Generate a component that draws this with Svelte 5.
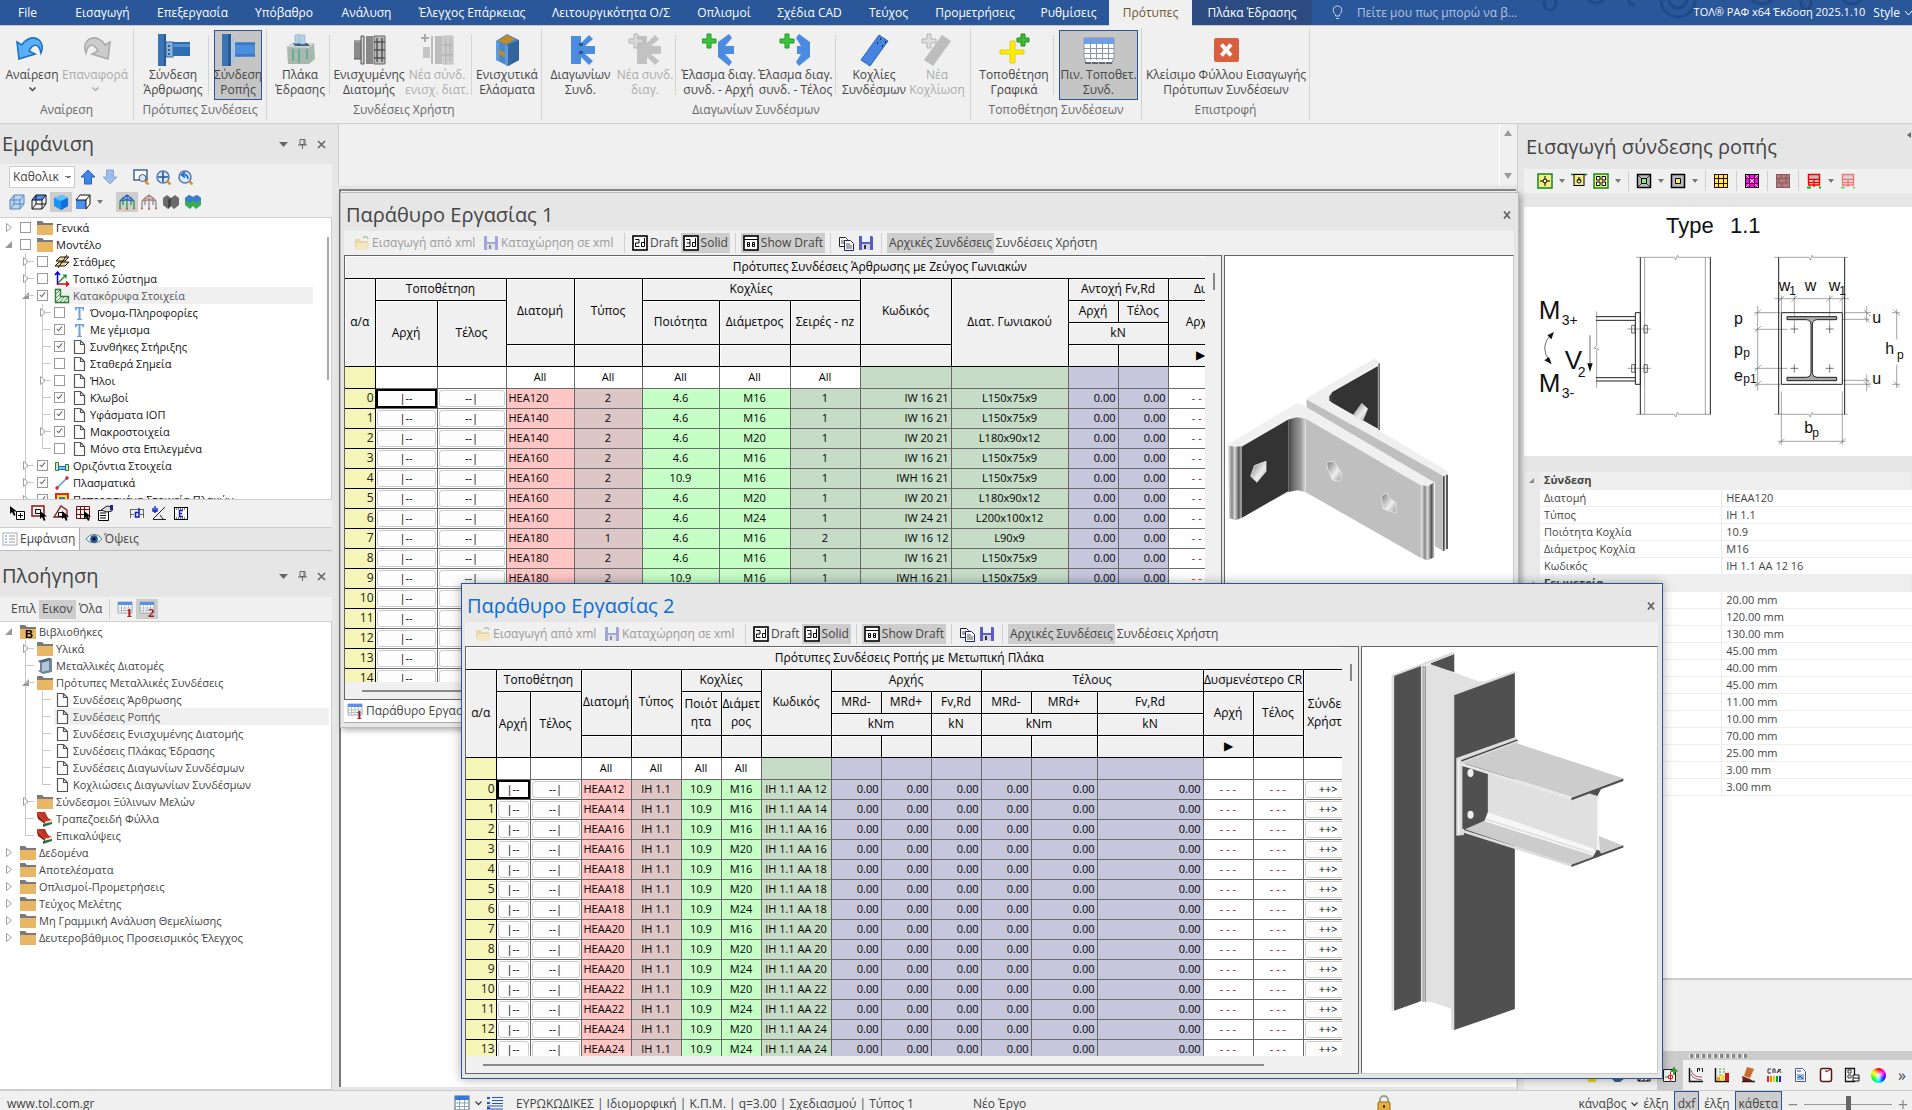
<script>
  const tabs = [
    ['File', 61], ['Εισαγωγή', 83], ['Επεξεργασία', 97], ['Υπόβαθρο', 86], ['Ανάλυση', 79],
    ['Έλεγχος Επάρκειας', 132], ['Λειτουργικότητα Ο/Σ', 146], ['Οπλισμοί', 80], ['Σχέδια CAD', 91],
    ['Τεύχος', 67], ['Προμετρήσεις', 106], ['Ρυθμίσεις', 81], ['Πρότυπες', 83], ['Πλάκα Έδρασης', 120]
  ];

  const groups = [
    { title: 'Αναίρεση', w: 134, start: true, items: [
      { t: ['Αναίρεση'], i: 'undo', w: 64, arrow: true },
      { t: ['Επαναφορά'], i: 'redo', w: 62, arrow: true, off: true }] },
    { title: 'Πρότυπες Συνδέσεις', w: 133, items: [
      { t: ['Σύνδεση', 'Άρθρωσης'], i: 'pinned', w: 70 }, null,
      { t: ['Σύνδεση', 'Ροπής'], i: 'moment', w: 48, on: true }] },
    { title: 'Συνδέσεις Χρήστη', w: 275, items: [
      { t: ['Πλάκα', 'Έδρασης'], i: 'base', w: 58 }, null,
      { t: ['Ενισχυμένης', 'Διατομής'], i: 'stiff', w: 68 },
      { t: ['Νέα σύνδ.', 'ενισχ. διατ.'], i: 'stiffNew', w: 68, off: true }, null,
      { t: ['Ενισχυτικά', 'Ελάσματα'], i: 'plates', w: 60 }] },
    { title: 'Διαγωνίων Συνδέσμων', w: 429, items: [
      { t: ['Διαγωνίων', 'Συνδ.'], i: 'diag', w: 69 },
      { t: ['Νέα συνδ.', 'διαγ.'], i: 'diagNew', w: 60, off: true }, null,
      { t: ['Έλασμα διαγ.', 'συνδ. - Αρχή'], i: 'diagStart', w: 75 },
      { t: ['Έλασμα διαγ.', 'συνδ. - Τέλος'], i: 'diagEnd', w: 79 }, null,
      { t: ['Κοχλίες', 'Συνδέσμων'], i: 'bolts', w: 66 },
      { t: ['Νέα', 'Κοχλίωση'], i: 'boltsNew', w: 60, off: true }] },
    { title: 'Τοποθέτηση Συνδέσεων', w: 171, items: [
      { t: ['Τοποθέτηση', 'Γραφικά'], i: 'place', w: 78 }, null,
      { t: ['Πιν. Τοποθετ.', 'Συνδ.'], i: 'table', w: 79, on: true }] },
    { title: 'Επιστροφή', w: 168, items: [
      { t: ['Κλείσιμο Φύλλου Εισαγωγής', 'Πρότυπων Συνδέσεων'], i: 'close', w: 160 }] }
  ];

  const knee = '<path d="M4 3h10v7l8-8 4 4-8 7h10v8H18l8 7-4 4-8-8v7H4z"/>';
  const plus = '<path d="M5 0h4v5h5v4H9v5H5V9H0V5h5z"/>';
  const strip = '<path d="M22 2l9 6-18 25-9-6z"/>';
  const big = {
    undo: '<path d="M2 13 4 30 20 25 14 22C18 14 24 14 26 24 31 12 20 4 9 13L7 16z" transform="translate(0 -4)" fill="#5ab0f5" stroke="#1c6fc4" stroke-width="1.6"/>',
    redo: '<path d="M32 13 30 30 14 25 20 22C16 14 10 14 8 24 3 12 14 4 25 13L27 16z" transform="translate(0 -4)" fill="#ccc" stroke="#aaa" stroke-width="1.6"/>',
    pinned: '<rect x="2" y="1" width="8" height="32" fill="#3a74b4"/><rect x="8" y="1" width="2" height="32" fill="#28598f"/><rect x="16" y="9" width="18" height="14" fill="#2f6db3"/><path d="M16 11h18v3H16z" fill="#558fd0"/><rect x="10" y="9" width="7" height="15" fill="#86b5e8" stroke="#34689f"/><path d="M13 12v2m0 2v2m0 2v2" stroke="#234" stroke-width="1.4"/>',
    moment: '<rect x="1" y="1" width="8" height="32" fill="#3a74b4"/><rect x="7" y="1" width="3" height="32" fill="#28598f"/><path d="M11 5h2v25h-2z" fill="#9fc5f0"/><rect x="14" y="9" width="20" height="15" fill="#4b8fdc"/><path d="M14 10h20v2H14zm0 11h20v2H14z" fill="#3a79c4"/>',
    base: '<path d="M4 14 9 10h22l1 16-6 5H5z" fill="#a9b8ae"/><path d="M4 14 9 10h22l-5 5z" fill="#cfd8d0"/><path d="M10 10h14l3 3H12z" fill="#3d5f83"/><path d="M12 2 16 1v9l-4 1zm5 0h5v9h-5z" fill="#b3d3ea" stroke="#87a9c4" stroke-width=".6"/><path d="M10 16v12m6-12v14m8-14v10" stroke="#4faa92" stroke-width="1.5"/>',
    stiff: '<path d="M2 9h7v17H2z" fill="#8b8b8b"/><path d="M9 3h3v28H9zM2 8h7M2 26h7" fill="#ccc" stroke="#555"/><path d="M14 3h7v28h-7z" fill="#888"/><path d="M22 3h11v28H22z" fill="#bbb" stroke="#666"/><path d="M25 5v24m5-24v24M22 9h11m-11 8h11m-11 8h11" stroke="#555" stroke-width="1.5" fill="none"/>',
    stiffNew: '<path d="M3 14h7v11H3z" fill="#c4c4c4"/><path d="M5 1v8M1 5h8" stroke="#aaa" stroke-width="2"/><path d="M11 3h2v28h-2z" fill="#bbb"/><path d="M15 3h7v28h-7z" fill="#bdbdbd"/><path d="M23 3h10v28H23z" fill="#d0d0d0" stroke="#bbb"/><path d="M26 5v24m4-24v24M22 12h11m-11 10h11" stroke="#b5b5b5" stroke-width="1.5"/>',
    plates: '<path d="M6 8 17 1l12 6v20L18 33 6 27z" fill="#4e87c8"/><path d="M17 12 29 7v20l-11 6z" fill="#33649c"/><path d="M8 8 17 2l8 4-9 5z" fill="#c88a1c"/><path d="M8 16l7 4v4l-7-3z" fill="#c88a1c"/><path d="M6 8v19l3 1V10zm9 4v20l3 1V13z" fill="#5e9ae0"/>',
    diag: `<g fill="#4b8be0"><g transform="translate(3)">${knee}</g></g><path d="M17 10v11" stroke="#29588f" stroke-width="4" stroke-dasharray="3 5"/>`,
    diagNew: `<g fill="#c2c2c2"><g transform="translate(5)">${knee}</g></g><g fill="#d8d8d8" stroke="#b4b4b4" transform="translate(1 1)">${plus}</g>`,
    diagStart: `<g fill="#4b8be0"><path d="M16 9l11-8 3 4-7 8h9v8h-9l7 8-3 4-11-9z"/></g><g fill="#3cc43a" stroke="#25962a" transform="translate(0 1)">${plus}</g>`,
    diagEnd: `<g fill="#4b8be0"><path d="M31 9 20 1l-3 4 5 8h-4v8h4l-5 8 3 4 11-9z"/></g><g fill="#3cc43a" stroke="#25962a" transform="translate(1 1)">${plus}</g>`,
    bolts: `<g fill="#4585e0" stroke="#2e68b8">${strip}</g><path d="M23 6h1m4 3h1m-9 1h1m4 3h1" stroke="#123" stroke-width="2"/>`,
    boltsNew: `<g fill="#bdbdbd">${strip}</g><g fill="#ddd" stroke="#b4b4b4" transform="translate(2 1)">${plus}</g>`,
    place: '<path d="M13 8h5v9h9v4h-9v9h-5v-9H3v-4h10z" fill="#ffee00" stroke="#d8c400" stroke-width=".8"/><path d="M24 1h4v4h4v4h-4v4h-4V9h-4V5h4z" fill="#42b830" stroke="#2a8a22"/>',
    table: '<path d="M2 5h30v19l-2 6H4l-2-6z" fill="#fff" stroke="#8a93a5"/><path d="M2 5h30v6H2z" fill="#6aa0f0"/><path d="M2 15.500h30M2 20.500h30M2 25.500h30M8.500 5v22m6-22v22m6-22v22m6-22v22" stroke="#8b95ab" fill="none"/><path d="M3 30h28" stroke="#475060" stroke-width="1.500" stroke-dasharray="6 1"/>',
    close: '<rect x="5" y="5" width="25" height="24" rx="2" fill="#d9603f"/><path d="M12.500 11.500l9.500 11m0-11-9.500 11" stroke="#fff" stroke-width="4"/>'
  };

  const cubeWire = '<path d="M1 6h10v9H1zM5 1h10v9H5zM1 6l4-5m6 5 4-5M1 15l4-5m6 5 4-5" fill="none" stroke="#111"/>';
  const frame = (c, top) => `<path d="M1 14V7M4 11V4M8 15V6M12 11V4M15 14V7" fill="none" stroke="${c}" stroke-width="1.300"/><path d="M1 7l7-1 7 1M4 4l4-3 4 3M1 7l3-3 4 2 4-2 3 3M8 1v5" fill="none" stroke="${top}" stroke-width="1.200"/><path d="M0 14.500h2m5 .5h2m5-.5h2" stroke="#d06030" stroke-width="1.500"/>`;
  const doc = '<path d="M3.500 1.500h6l4 4v9h-10zM9.500 1.500v4h4" fill="#fff" stroke="#555" stroke-width="1.200"/>';
  const floppy = '<path d="M1 1h13l1 1v13H1z" fill="#5a5cc4"/><path d="M4 1h8v6H4z" fill="#e9f2fb"/><path d="M4 9h8v6H4z" fill="#cfd6e4"/><path d="M6 10h2v4H6z" fill="#333"/>';
  const grid = (n) => `<path d="M1 1h14v11H1z" fill="#fff" stroke="#9aa"/><path d="M1 1h14v3H1z" fill="#5b8fe8"/><path d="M1 7h14M1 9.500h14M4.500 4v8m3.500-8v8m3.500-8v8" stroke="#b9c0cc"/><text x="9" y="16" font-size="13" font-weight="bold" font-family="Liberation Serif" fill="#a81418">${n}</text>`;
  const cursor = '<path d="M1 1v8l2-2 2 4 1.500-1L5 6.500h3z" fill="#000"/>';
  const folder = '<path d="M0 1h5l2 2h9v2H0z" fill="#7a7a7a"/><path d="M0 5h16v10H0z" fill="#e9b666"/>';
  const mag = '<circle cx="8" cy="8" r="6" fill="#dcebfb" stroke="#4d79b5" stroke-width="1.500"/><path d="M12 12l3.500 3.500" stroke="#d9912b" stroke-width="2.500"/>';
  const boxed = (t) => `<rect x="1" y="1" width="14" height="14" fill="#fff" stroke="#000" stroke-width="1.600"/>${t}`;
  const digit2 = '<path d="M3.500 5v-.5h3.500v3.500H3.500v3.500H7.500" fill="none" stroke="#000"/>';
  const digit3 = '<path d="M3 4.500h4v7H3m1-3.500h3" fill="none" stroke="#000"/>';
  const dd = '<path d="M12.500 3v8.500h-3v-4h3" fill="none" stroke="#000"/>';
  const book = '<path d="M0 1h8l3 6 4 2-7 2L0 5z" fill="#d03a28"/><path d="M0 4l8 7v2L1 8z" fill="#8a2015"/><path d="M3 1l6 8M6 1l5 7" stroke="#a02818"/><path d="M8 11l7-2v2l-7 2z" fill="#f0e0c0"/><path d="M6 13l9-2v2l-9 3z" fill="#2a6d46"/>';
  const ic = {
    folder, doc, book, floppy,
    folderB: folder + '<text x="5" y="14" font-size="11" font-weight="bold" font-family="Liberation Sans">B</text>',
    beam: '<path d="M1 3 12 0l3 1v13l-9 2-5-3 2-1V5z" fill="#6f8598"/><path d="M1 3 12 0l3 1-9 3z" fill="#4f6475"/><path d="M5 5l7-2v9l-7 2z" fill="#b4c6d6"/>',
    levels: '<path d="M1 12 5 8h10l-4 4zM2 7l4-4h9l-4 4z" fill="#f6dc86" stroke="#111"/><path d="M4 14 13 1" stroke="#111"/>',
    axes: '<path d="M3.500 14V2M1 4l2.500-3L6 4" fill="none" stroke="#0000e8" stroke-width="1.500"/><path d="M3 13h11M12 10.500l2.500 2.500-2.500 2.500" fill="none" stroke="#e00000" stroke-width="1.500"/><path d="M4 12l8-8M8.500 4H12v3.500" fill="none" stroke="#108030" stroke-width="1.200"/>',
    wall: '<path d="M1.500 1.500h5v7h8v6h-13z" fill="#e3f4e3" stroke="#22862c" stroke-width="1.300"/><path d="M2 6l4-4M2 10l4-4M2 14l5-5M6 14l4-5m0 5 4-5" stroke="#555" stroke-width=".8"/>',
    T: '<path d="M4 2h9v3.500h-1L11 3.500H9.500v10l1.500.5v1H6v-1l1.500-.5v-10H6l-1 2H4z" fill="#6ea2dd"/>',
    horiz: '<path d="M1.500 4.500h3v8h-3zM11.500 6.500h3v6h-3z" fill="#cfe8c8" stroke="#2f7a33"/><path d="M4.500 8.500h7v3h-7z" fill="#7ec8f0" stroke="#1570a8"/>',
    line: '<path d="M3 13 13 3" stroke="#4a9bd8" stroke-width="1.500"/><path d="M1 13h4M3 11v4M11 3h4M13 1v4" stroke="#d00" stroke-width="1.200"/>',
    fem: '<rect x="1" y="1" width="14" height="14" fill="#e8281a"/><rect x="3" y="3" width="10" height="10" fill="#ffe12b"/><rect x="5" y="5" width="6" height="6" fill="#1f7be0"/>',
    up: '<path d="M8 1l7 7h-3.500v7h-7V8H1z" fill="#3f86e6" stroke="#2a62b8"/>',
    down: '<path d="M8 15 1 8h3.500V1h7v7H15z" fill="#9dbdec" stroke="#86a6d8"/>',
    zRect: '<rect x="1" y="1" width="13" height="10" fill="#fff" stroke="#355b8c" stroke-width="1.400"/><circle cx="9.500" cy="9" r="3.500" fill="#d5e6fa" stroke="#557"/><path d="M12 12l3.500 3.500" stroke="#d9912b" stroke-width="2.500"/>',
    zAll: mag + '<path d="M8 3v10M3 8h10" stroke="#23508f" stroke-width="1.600"/>',
    zPrev: mag + '<path d="M11 10c0-4-3-5-5-4M8 3 4.500 6 8 8.500" fill="none" stroke="#2a6fd0" stroke-width="1.800"/>',
    c1: '<path d="M1 6l4-5h10v9l-4 5H1z" fill="#b9d6f5"/><path d="M1 6h10v9H1zM5 1h10v9H5zM1 6l4-5m6 5 4-5M1 15l4-5m6 5 4-5" fill="none" stroke="#5b86b8"/>',
    c2: '<path d="M1 6l4-5h10l-4 5z" fill="#4a90f0"/>' + cubeWire,
    c3: '<path d="M1 4 9 1l6 3v8l-7 4-7-4z" fill="#1993f5"/><path d="M1 4 9 1l6 3-7 3z" fill="#5cc2ff"/><path d="M8 7l7-3v8l-7 4z" fill="#0f6fe0"/>',
    c4: '<path d="M5 1h10v9l-4 5V6H1z" fill="#fff"/><path d="M1 6h10v9H1z" fill="#4a90f0"/><path d="M5 1h10v9M1 6l4-5m6 5 4-5m-4 14 4-5M1 6h10v9" fill="none" stroke="#111"/>',
    f1: frame('#2e9a46', '#2a62c8'),
    f2: frame('#8a8a8a', '#a8807a'),
    f3: '<path d="M0 4 4 1l4 3 4-3 4 3v7l-5 4-3-3-3 3-5-4z" fill="#6a6a6a"/><path d="M8 4v8l-3 3V6z" fill="#444"/>',
    f4: '<path d="M0 4 4 1l4 2 4-2 4 3v7l-5 4-3-3-3 3-5-4z" fill="#34b050"/><path d="M0 4 4 1l4 2 4-2 4 3v2l-5 3-3-3-3 3-5-3z" fill="#3f78dc"/>',
    s1: cursor + '<path d="M7.500 6.500h8v8h-8zM11.500 8v5M9 10.500h5" fill="#fff" stroke="#000"/>',
    s2: '<path d="M1 1h12v10H1z" fill="none" stroke="#8a1420" stroke-width="1.500"/><path d="M4.500 4.500h5v4h-5z" fill="none" stroke="#000"/><g transform="translate(8 5)">' + cursor + '</g>',
    s3: '<path d="M1 12 8 1l6 4v7z" fill="none" stroke="#8a1420" stroke-width="1.300"/><path d="M5.500 7.500h5v4h-5z" fill="none" stroke="#000"/><g transform="translate(8 5)">' + cursor + '</g>',
    s4: '<path d="M1.500 1.500h13v12h-13zM1.500 4.500h13M5.500 1.500v12m4-12v12M2 9.500h8" fill="none" stroke="#611"/><g transform="translate(8 5)">' + cursor + '</g>',
    s5: '<path d="M1.500 5.500h10v10h-10zM3 8h6M3 10.500h6M3 13h6" fill="#fff" stroke="#000"/><path d="M4 5l6-4 5 1v4l-5 1z" fill="#ddd" stroke="#222"/><path d="M13 0h3v5h-3z" fill="#1a2a8a"/>',
    s6: '<path d="M1.500 4v9m13-9v9M1 4.500h14M2 9.500h3m6 0h3" fill="none" stroke="#666"/><path d="M10 3v9H6.500V7.500H10" fill="none" stroke="#1020c0" stroke-width="1.500"/>',
    s7: '<path d="M2 14 14 2M2 14.500h13M9 10l3 4" fill="none" stroke="#222"/><path d="M2 3v3h4V3M4 1v7" fill="none" stroke="#1020c0" stroke-width="1.400"/>',
    s8: '<rect x="1.500" y="2.500" width="13" height="12" fill="#fff" stroke="#000"/><path d="M3 4h10M3 13h10" stroke="#000" stroke-dasharray="1 1"/><path d="M10 5.500H6.500v6H10M6 8.500h3" fill="none" stroke="#1020c0" stroke-width="1.500"/>',
    list: '<rect x="1" y="2" width="14" height="12" fill="#fff" stroke="#aab"/><path d="M3 5h2m-2 3h2m-2 3h2" stroke="#48c"/><path d="M7 5h6M7 8h6m-6 3h6" stroke="#999"/>',
    eye: '<path d="M0 8c4-6 12-6 16 0-4 5-12 5-16 0z" fill="#e8f1fa" stroke="#678"/><circle cx="8" cy="8" r="3.800" fill="#215a9a"/><circle cx="8" cy="8" r="1.600" fill="#001"/>',
    sh1: grid(1), sh2: grid(2),
    open: '<path d="M1 4h5l1 2h7v9H1z" fill="#e8c264"/><path d="M3 8h13l-2 7H1z" fill="#f7df98"/><path d="M9 3c2-2 4-2 5 1" fill="none" stroke="#48b048" stroke-width="1.500"/>',
    d2: boxed(digit2 + dd), d3: boxed(digit3 + dd),
    draft: boxed('<path d="M1 4.500h14M4.500 7.500h2v4h-2zm5 0h2v4h-2zM4.500 9.500h2m3 0h2" fill="none" stroke="#000"/>'),
    copy: '<path d="M1.500 2.500h6l2 2v7h-8z" fill="#fff" stroke="#223"/><path d="M3 6h4M3 8h4" stroke="#555"/><path d="M6.500 5.500h6l3 3v7h-9z" fill="#fff" stroke="#1a2470"/><path d="M8 9h4m-4 2h6m-6 2h6" stroke="#555"/>',
    r1: '<rect x="1" y="1" width="14" height="14" fill="#f4f07a" stroke="#118822" stroke-width="1.500"/><path d="M8 3v10M3 8h10" stroke="#000"/><circle cx="8" cy="8" r="2" fill="#fff" stroke="#000"/>',
    r2: '<path d="M0 1.500h16" stroke="#117722" stroke-width="1.500"/><rect x="3" y="1.500" width="10" height="11" fill="#f4f07a" stroke="#000"/><circle cx="8" cy="8" r="2" fill="#fff" stroke="#000"/><path d="M8 4v4" stroke="#000"/>',
    r3: '<rect x="1" y="1" width="14" height="14" fill="#f4f07a" stroke="#118822" stroke-width="1.500"/><path d="M3.500 3.500h3.500v3.500H3.500zM9 3.500h3.500v3.500H9zM3.500 9h3.500v3.500H3.500zM9 9h3.500v3.500H9z" fill="#fff" stroke="#000"/>',
    r4: '<rect x="1.500" y="1.500" width="13" height="13" fill="#bbb" stroke="#000" stroke-width="1.500"/><path d="M2 2l12 12M14 2 2 14" stroke="#000" stroke-width=".7"/><path d="M5.500 5.500h5v5h-5z" fill="#7df07d" stroke="#000"/>',
    r5: '<rect x="1.500" y="1.500" width="13" height="13" fill="#bbb" stroke="#000" stroke-width="1.500"/><path d="M5.500 5.500h5v5h-5z" fill="#ffee44" stroke="#000"/>',
    r6: '<rect x="1.500" y="1.500" width="13" height="13" fill="#ffee44" stroke="#300"/><path d="M2 5.500h12M2 10.500h12M5.500 2v12M10.500 2v12" stroke="#300"/>',
    r7: '<rect x="1.500" y="1.500" width="13" height="13" fill="#f0f" stroke="#000"/><path d="M2 2l12 12M14 2 2 14" stroke="#ff4"/><path d="M5.500 2v12m5-12v12M2 5.500h12M2 10.500h12" stroke="#000" stroke-width=".6" fill="none"/>',
    r8: '<rect x="1.500" y="1.500" width="13" height="13" fill="#c07878" stroke="#7a6060"/><path d="M2 5.500h12M2 10h12M6 2v3.500m5-3.500v3.500M4 6v4m7-4v4M7 10v4" stroke="#7a6060" stroke-width="1.200"/>',
    r9: '<path d="M2.500 1.500h11v5h-11z" fill="#bbb" stroke="#e00" stroke-width="1.500"/><path d="M2.500 6v6M13.500 6v6M2 9.500h12M8 7v7M2 12h12" stroke="#e00" stroke-width="1.300"/><path d="M1 14.500h4m8 0h2" stroke="#0b0" stroke-width="2"/>',
    b1: '<path d="M4 12h8v3H4z" fill="#e8d800"/>',
    b2: '<path d="M1 11c4-3 10-3 14 0l-5 4H5z" fill="#3d5f83"/>',
    b3: '<path d="M2 2h12v12H2zM2 11h12" fill="#fff" stroke="#000"/><path d="M3 14l2-3m2 3 2-3m2 3 2-3" stroke="#000"/>',
    b4: '<path d="M1.500 2.500h12v12h-12z" fill="#fff" stroke="#222"/><path d="M6.500 8.500h4v3h-4zM8.500 5v10M3 10h4" fill="none" stroke="#d22"/><path d="M12 0v8M8.500 4h7" stroke="#3aa63a" stroke-width="2"/>',
    b5: '<path d="M1.500 1v13.500H15" fill="none" stroke="#111" stroke-width="1.500"/><path d="M3 3c2 6 6 7 11 7M3 7c2 5 6 5 11 6" fill="none" stroke="#a05070"/><path d="M9.500 5V1.500h2v2.500m3 1V1.500h-1" fill="none" stroke="#111"/>',
    b6: '<path d="M1.500 1v13.500H15" fill="none" stroke="#111" stroke-width="1.500"/><path d="M3 10h3v4H3z" fill="#f90"/><path d="M7 8h3v6H7z" fill="#fd0"/><path d="M11 6h4v8h-4z" fill="#d11"/><path d="M6 1v8m4-8v5" stroke="#2a2" stroke-dasharray="2 1"/>',
    b7: '<path d="M7 0l7 2-4 9-6-2z" fill="#c86a2a"/><path d="M2 9l8 3 4 3H3z" fill="#7a1a10"/><path d="M2 14.500h13" stroke="#222" stroke-width="1.500"/>',
    b8: '<path d="M5 2H2v4h3M7 2v4m0-4h2v4M11 6l2-4 2 4m-4 0 4-4" fill="none" stroke="#334"/><path d="M2 9v6" stroke="#e22" stroke-width="2"/><path d="M5 9v6" stroke="#f80" stroke-width="2"/><path d="M8 9v6" stroke="#dd0" stroke-width="2"/><path d="M11 9v6" stroke="#0a0" stroke-width="2"/><path d="M14 9v6" stroke="#22d" stroke-width="2"/>',
    b9: '<path d="M3.500 1.500h7l3 3v10h-10z" fill="#fff" stroke="#557"/><path d="M5 7h7v6H5z" fill="#8ab4ea"/><path d="M5 4h4M6 11l2-2 3 3" stroke="#347" fill="none"/>',
    b10: '<rect x="2.500" y="1.500" width="11" height="13" rx="2" fill="#fff" stroke="#611" stroke-width="1.500"/><path d="M8 5l5-3M8 5V3" stroke="#611"/>',
    b11: '<path d="M1.500 1.500h9v13h-9z" fill="#fff" stroke="#111" stroke-width="1.300"/><path d="M4 3v3h3V3zm0 5v3h3V8z" fill="none" stroke="#333"/><path d="M9 8h6v6H9zM9 11h6" fill="#fff" stroke="#111"/>',
    calc: '<rect x="1" y="1" width="14" height="14" fill="#fff" stroke="#567"/><path d="M1 1h14v4H1z" fill="#3a78d8"/><path d="M1 8h14M1 11.500h14M5.500 5v10m5-10v10" stroke="#8aa"/>',
    lines: '<path d="M0 3h3m-3 5h3m-3 5h3" stroke="#25c" stroke-width="2"/><path d="M5 2.500h11M5 5.500h11M5 8.500h11M0 11h16M0 14h16" stroke="#25c"/>',
    lock: '<path d="M4 8V5a4 4 0 0 1 8 0v3" fill="none" stroke="#999" stroke-width="1.800"/><rect x="2" y="7" width="12" height="9" rx="1" fill="#e8b23a" stroke="#9a6d10"/><path d="M8 10v3" stroke="#532" stroke-width="2"/>'
  };

  // [depth, expander, checked, icon, label, flag]
  const view = [
    [0, 'c', 0, 'folder', 'Γενικά'], [0, 'o', 0, 'folder', 'Μοντέλο'],
    [1, 'c', 0, 'levels', 'Στάθμες'], [1, 'c', 0, 'axes', 'Τοπικό Σύστημα'],
    [1, 'o', 1, 'wall', 'Κατακόρυφα Στοιχεία', 'sel'],
    [2, 'c', 0, 'T', 'Όνομα-Πληροφορίες'], [2, '', 1, 'T', 'Με γέμισμα'],
    [2, '', 1, 'doc', 'Συνθήκες Στήριξης'], [2, '', 0, 'doc', 'Σταθερά Σημεία'],
    [2, 'c', 0, 'doc', 'Ήλοι'], [2, '', 1, 'doc', 'Κλωβοί'], [2, '', 1, 'doc', 'Υφάσματα ΙΟΠ'],
    [2, 'c', 1, 'doc', 'Μακροστοιχεία'], [2, '', 0, 'doc', 'Μόνο στα Επιλεγμένα', 'last'],
    [1, 'c', 1, 'horiz', 'Οριζόντια Στοιχεία'], [1, 'c', 1, 'line', 'Πλασματικά'],
    [1, 'c', 1, 'fem', 'Πεπερασμένα Στοιχεία Πλακών']
  ];
  const library = [
    [0, 'o', null, 'folderB', 'Βιβλιοθήκες'], [1, 'c', null, 'folder', 'Υλικά'],
    [1, '', null, 'beam', 'Μεταλλικές Διατομές'], [1, 'o', null, 'folder', 'Πρότυπες Μεταλλικές Συνδέσεις'],
    [2, '', null, 'doc', 'Συνδέσεις Άρθρωσης'], [2, '', null, 'doc', 'Συνδέσεις Ροπής', 'sel'],
    [2, '', null, 'doc', 'Συνδέσεις Ενισχυμένης Διατομής'], [2, '', null, 'doc', 'Συνδέσεις Πλάκας Έδρασης'],
    [2, '', null, 'doc', 'Συνδέσεις Διαγωνίων Συνδέσμων'], [2, '', null, 'doc', 'Κοχλιώσεις Διαγωνίων Συνδέσμων', 'last'],
    [1, 'c', null, 'folder', 'Σύνδεσμοι Ξύλινων Μελών'], [1, '', null, 'book', 'Τραπεζοειδή Φύλλα'],
    [1, '', null, 'book', 'Επικαλύψεις', 'last'], [0, 'c', null, 'folder', 'Δεδομένα'],
    [0, 'c', null, 'folder', 'Αποτελέσματα'], [0, 'c', null, 'folder', 'Οπλισμοί-Προμετρήσεις'],
    [0, 'c', null, 'folder', 'Τεύχος Μελέτης'], [0, 'c', null, 'folder', 'Μη Γραμμική Ανάλυση Θεμελίωσης'],
    [0, 'c', null, 'folder', 'Δευτεροβάθμιος Προσεισμικός Έλεγχος']
  ];

  // header cells: [text, colspan, rowspan]
  const hinge = {
    title: 'Πρότυπες Συνδέσεις Άρθρωσης με Ζεύγος Γωνιακών',
    cols: [30, 62, 69, 68, 68, 77, 71, 70, 91, 117, 50, 50, 64, 86, 97],
    head: [
      [['α/α', 1, 4], ['Τοποθέτηση', 2, 1], ['Διατομή', 1, 3], ['Τύπος', 1, 3], ['Κοχλίες', 3, 1], ['Κωδικός', 1, 3], ['Διατ. Γωνιακού', 1, 4], ['Αντοχή Fv,Rd', 2, 1], ['Δυσμενέστερο CR', 2, 1], ['Σύνδεση\nΧρήστη', 1, 4]],
      [['Αρχή', 1, 3], ['Τέλος', 1, 3], ['Ποιότητα', 1, 2], ['Διάμετρος', 1, 2], ['Σειρές - nz', 1, 2], ['Αρχή', 1, 1], ['Τέλος', 1, 1], ['Αρχή', 1, 2], ['Τέλος', 1, 2]],
      [['kN', 2, 1]],
      [...Array(8).fill(['', 1, 1]), ['▶', 1, 1], ['', 1, 1]]
    ],
    kinds: ['pink', 'rose', 'green', 'green', 'sage', 'sage end', 'sage', 'lav', 'lav', 'dash', 'dash'],
    filters: ['All', 'All', 'All', 'All', 'All', '', '', '', '', '', ''],
    rows: [
      ['HEA120', 2, '4.6', 'M16', 1, 'IW 16 21', 'L150x75x9'], ['HEA140', 2, '4.6', 'M16', 1, 'IW 16 21', 'L150x75x9'],
      ['HEA140', 2, '4.6', 'M20', 1, 'IW 20 21', 'L180x90x12'], ['HEA160', 2, '4.6', 'M16', 1, 'IW 16 21', 'L150x75x9'],
      ['HEA160', 2, '10.9', 'M16', 1, 'IWH 16 21', 'L150x75x9'], ['HEA160', 2, '4.6', 'M20', 1, 'IW 20 21', 'L180x90x12'],
      ['HEA160', 2, '4.6', 'M24', 1, 'IW 24 21', 'L200x100x12'], ['HEA180', 1, '4.6', 'M16', 2, 'IW 16 12', 'L90x9'],
      ['HEA180', 2, '4.6', 'M16', 1, 'IW 16 21', 'L150x75x9'], ['HEA180', 2, '10.9', 'M16', 1, 'IWH 16 21', 'L150x75x9'],
      ...Array(5).fill(['', '', '', '', '', '', ''])
    ].map((r) => (r[0] ? [...r, '0.00', '0.00', '- - -', '- - -'] : [...r, '', '', '', '']))
  };
  const moment = {
    title: 'Πρότυπες Συνδέσεις Ροπής με Μετωπική Πλάκα',
    cols: [30, 34, 51, 50, 50, 40, 40, 70, 50, 50, 50, 50, 66, 106, 50, 50, 50],
    head: [
      [['α/α', 1, 4], ['Τοποθέτηση', 2, 1], ['Διατομή', 1, 3], ['Τύπος', 1, 3], ['Κοχλίες', 2, 1], ['Κωδικός', 1, 3], ['Αρχής', 3, 1], ['Τέλους', 3, 1], ['Δυσμενέστερο CR', 2, 1], ['Σύνδεσ\nΧρήστη', 1, 4]],
      [['Αρχή', 1, 3], ['Τέλος', 1, 3], ['Ποιότ\nητα', 1, 2], ['Διάμετ\nρος', 1, 2], ['MRd-', 1, 1], ['MRd+', 1, 1], ['Fv,Rd', 1, 1], ['MRd-', 1, 1], ['MRd+', 1, 1], ['Fv,Rd', 1, 1], ['Αρχή', 1, 2], ['Τέλος', 1, 2]],
      [['kNm', 2, 1], ['kN', 1, 1], ['kNm', 2, 1], ['kN', 1, 1]],
      [...Array(11).fill(['', 1, 1]), ['▶', 1, 1], ['', 1, 1]]
    ],
    kinds: ['pink', 'rose', 'green', 'green', 'sage', 'lav', 'lav', 'lav', 'lav', 'lav', 'lav', 'dash', 'dash'],
    filters: ['All', 'All', 'All', 'All', '', '', '', '', '', '', '', '', ''],
    rows: ['12 16', '14 16', '16 16', '16 20', '18 16', '18 20', '18 24', '20 16', '20 20', '20 24', '22 20', '22 24', '24 20', '24 24'].map((s) => {
      const [h, m] = s.split(' ');
      return ['HEAA' + h, 'IH 1.1', '10.9', 'M' + m, 'IH 1.1 AA ' + h, ...Array(6).fill('0.00'), '- - -', '- - -'];
    })
  };

  const section = [['Διατομή', 'HEAA120'], ['Τύπος', 'IH 1.1'], ['Ποιότητα Κοχλία', '10.9'], ['Διάμετρος Κοχλία', 'M16'], ['Κωδικός', 'IH 1.1 AA 12 16']];
  const geometry = ['20.00', '120.00', '130.00', '45.00', '40.00', '45.00', '11.00', '10.00', '70.00', '25.00', '3.00', '3.00'];
  const rightTools = ['r1', '>', 'r2', 'r3', '>', '|', 'r4', '>', 'r5', '>', '|', 'r6', '|', 'r7', '|', 'r8', '|', 'r9', '>', 'r9 dim'];
  const bottomTools = ['b1', 'b2', 'b3', 'b4 on', 'b5', 'b6', 'b7', 'b8', 'b9', 'b10', 'b11'];
  const sum = (a) => a.reduce((x, y) => x + y, 0);
</script>

{#snippet icon(name)}
  <svg class="ic" viewBox="0 0 16 16" aria-hidden="true">{@html ic[name]}</svg>
{/snippet}

{#snippet tool(spec)}
  {#if spec === '|'}<i class="sep"></i>
  {:else if spec === '>'}<i class="caret"></i>
  {:else}<button class="tool {spec.split(' ')[1] ?? ''}" aria-label={spec}>{@render icon(spec.split(' ')[0])}</button>{/if}
{/snippet}

{#snippet tree(rows)}
  <ul class="tree">
    {#each rows as [depth, exp, checked, name, label, flag]}
      <li class:child={depth > 0} class:last={flag === 'last'}>
        {#each Array(depth) as _, i}<i class="guide" class:rule={i > 0}></i>{/each}
        <i class="exp">
          {#if exp}
            <svg width="8" height="9" viewBox="0 0 8 9"><path d={exp === 'c' ? 'M1.5.5v8l5-4z' : 'M7 1v7H0z'} fill={exp === 'c' ? '#fff' : '#999'} stroke={exp === 'c' ? '#a0a0a0' : 'none'} /></svg>
          {/if}
        </i>
        <label class:sel={flag === 'sel'}>
          {#if checked !== null}<input type="checkbox" checked={checked === 1} />{/if}
          <span class="node">{@render icon(name)}<span>{label}</span></span>
        </label>
      </li>
    {/each}
  </ul>
{/snippet}

{#snippet panelHead(title)}
  <header class="panel-head">
    <h2>{title}</h2>
    <button aria-label="Μενού"><svg width="9" height="9" viewBox="0 0 9 9"><path d="M0 2h9L4.500 7z" fill="#666" /></svg></button>
    <button aria-label="Καρφίτσωμα"><svg width="9" height="10" viewBox="0 0 9 10"><path d="M2 .5h5v5H2zM6 1v4M0 6h9M4.500 6v4" fill="none" stroke="#666" /></svg></button>
    <button aria-label="Κλείσιμο"><svg width="9" height="9" viewBox="0 0 9 9"><path d="M1 1l7 7M8 1 1 8" stroke="#666" stroke-width="1.600" /></svg></button>
  </header>
{/snippet}

{#snippet sheet(d)}
  <div class="pane">
    <div class="clip">
      <table class="sheet" style:width="{sum(d.cols)}px">
        <colgroup>{#each d.cols as w}<col style:width="{w}px" />{/each}</colgroup>
        <thead>
          <tr><th colspan={d.cols.length}>{d.title}</th></tr>
          {#each d.head as row}
            <tr>{#each row as [text, c, r]}<th colspan={c} rowspan={r}>{text}</th>{/each}</tr>
          {/each}
        </thead>
        <tbody>
          <tr class="filter">
            <td class="num"></td><td></td><td></td>
            {#each d.filters as f, i}<td class={f ? '' : d.kinds[i]}>{f}</td>{/each}<td></td>
          </tr>
          {#each d.rows as row, n}
            <tr>
              <td class="num">{n}</td>
              <td class="act" class:focus={n === 0}><button>|--</button></td>
              <td class="act"><button>--|</button></td>
              {#each row as v, i}<td class={d.kinds[i]}>{v}</td>{/each}
              <td class="act"><button>++&gt;</button></td>
            </tr>
          {/each}
        </tbody>
      </table>
    </div>
    <div class="vbar"><i></i></div>
    <div class="hbar"><i></i></div>
  </div>
{/snippet}

{#snippet winTools()}
  <div class="win-tools">
    <button class="dim wide">{@render icon('open')}Εισαγωγή από xml</button>
    <button class="dim wide2">{@render icon('floppy')}Καταχώρηση σε xml</button>
    <i class="sep"></i>
    <button>{@render icon('d2')}Draft</button>
    <button class="on">{@render icon('d3')}Solid</button>
    <i class="sep"></i>
    <button class="on">{@render icon('draft')}Show Draft</button>
    <i class="sep"></i>
    <button aria-label="Αντιγραφή">{@render icon('copy')}</button>
    <button aria-label="Αποθήκευση">{@render icon('floppy')}</button>
    <i class="sep"></i>
    <button class="on">Αρχικές Συνδέσεις</button>
    <button>Συνδέσεις Χρήστη</button>
  </div>
{/snippet}

{#snippet winHead(title)}
  <header class="win-head">
    <h2>{title}</h2>
    <button aria-label="Κλείσιμο"><svg width="8" height="8" viewBox="0 0 8 8"><path d="M1 .5l6 7M7 .5l-6 7" stroke="#666" stroke-width="1.800" /></svg></button>
  </header>
{/snippet}

<div class="app">
  <nav class="tabs">
    <svg class="deco" width="372" height="25" viewBox="0 0 372 25" aria-hidden="true">
      <g fill="none" stroke="#1f4a87" stroke-width="3">
        <ellipse cx="10" cy="3" rx="6" ry="7" /><circle cx="56" cy="-9" r="12" /><path d="M90-2c-3 4 0 8 5 6" />
        <circle cx="138" cy="0" r="17" /><circle cx="138" cy="-1" r="9" /><circle cx="222" cy="-9" r="13" />
        <ellipse cx="266" cy="2" rx="5" ry="8" /><circle cx="312" cy="-8" r="12" />
      </g>
    </svg>
    {#each tabs as [t, w], i}
      <button style:width="{w}px" class:active={i === 12} class:context={i === 13}>{t}</button>
    {/each}
    <label class="search">
      <svg width="11" height="15" viewBox="0 0 11 15"><path d="M3.500 11V9.500C0 7 .5 1 5.500 1s5.500 6 2 8.500V11zM4 13.500h3" fill="none" stroke="#c9d6ea" /></svg>
      <input placeholder="Πείτε μου πως μπορώ να β..." aria-label="Αναζήτηση" />
    </label>
    <span class="product">ΤΟΛ® ΡΑΦ x64 Έκδοση 2025.1.10</span>
    <button class="style">Style</button>
    <svg width="7" height="6" viewBox="0 0 7 6"><path d="M0 1l3.500 4L7 1" fill="none" stroke="#fff" /></svg>
  </nav>

  <div class="ribbon">
    {#each groups as g}
      <section style:width="{g.w}px">
        <div class="btns" class:start={g.start}>
          {#each g.items as b}
            {#if b}
              <button style:width="{b.w}px" class:on={b.on} class:off={b.off}>
                <svg width="34" height="34" viewBox="0 0 34 34" aria-hidden="true">{@html big[b.i]}</svg>
                {#each b.t as line}<span>{line}</span>{/each}
                {#if b.arrow}<svg class="chev" width="7" height="5" viewBox="0 0 7 5"><path d="M.5.5l3 3 3-3" fill="none" stroke="currentColor" stroke-width="1.500" /></svg>{/if}
              </button>
            {:else}<i></i>{/if}
          {/each}
        </div>
        <h3>{g.title}</h3>
      </section>
    {/each}
  </div>

  <main>
    <aside class="left">
      <section class="panel view">
        {@render panelHead('Εμφάνιση')}
        <div class="tools two">
          <div>
            <select aria-label="Σύστημα"><option>Καθολικ</option></select>
            {#each ['up', 'down'] as s}{@render tool(s)}{/each}
            <i class="space"></i>
            {#each ['zRect', 'zAll', 'zPrev'] as s}{@render tool(s)}{/each}
          </div>
          <div>
            {#each ['c1', 'c2', 'c3 on', 'c4', '>'] as s}{@render tool(s)}{/each}
            <i class="space small"></i>
            {#each ['f1 on', 'f2', 'f3', 'f4'] as s}{@render tool(s)}{/each}
          </div>
        </div>
        <div class="tree-box">{@render tree(view)}<i class="thumb"></i></div>
        <div class="tools foot">
          {#each ['s1', 's2', 's3', 's4', 's5'] as s}{@render tool(s)}{/each}
          <i class="space small"></i>
          {#each ['s6', 's7', 's8'] as s}{@render tool(s)}{/each}
        </div>
        <div class="pane-tabs">
          <button class="current">{@render icon('list')}Εμφάνιση</button>
          <button>{@render icon('eye')}Όψεις</button>
        </div>
      </section>
      <section class="panel library">
        {@render panelHead('Πλοήγηση')}
        <div class="tools text">
          <button>Επιλ</button><button class="on">Εικον</button><button>Όλα</button>
          {#each ['|', 'sh1', 'sh2 on'] as s}{@render tool(s)}{/each}
        </div>
        <div class="tree-box">{@render tree(library)}</div>
      </section>
    </aside>

    <div class="center">
      <div class="mdi-top">
        <div class="scroll"><i class="a-up"></i><i class="a-down"></i></div>
      </div>
      <div class="canvas"></div>
    </div>

    <aside class="right">
      <header><h2>Εισαγωγή σύνδεσης ροπής</h2><i></i></header>
      <div class="tools">{#each rightTools as s}{@render tool(s)}{/each}</div>
      <figure>
        <svg width="388" height="249" viewBox="42 111 1164 747" font-family="Liberation Sans, sans-serif" fill="#111" aria-label="Type 1.1">
          <g font-size="66"><text x="468" y="188">Type</text><text x="660" y="188">1.1</text></g>
          <g font-size="78"><text x="86" y="448">M</text><text x="164" y="597">V</text><text x="86" y="666">M</text></g>
          <g font-size="42"><text x="155" y="466">3+</text><text x="203" y="620">2</text><text x="155" y="683">3-</text></g>
          <g font-size="48"><text x="806" y="363">w</text><text x="884" y="363">w</text><text x="956" y="363">w</text><text x="672" y="462">p</text><text x="672" y="554">p</text><text x="672" y="632">e</text><text x="1087" y="458">u</text><text x="1087" y="642">u</text><text x="1126" y="552">h</text><text x="883" y="790">b</text></g>
          <g font-size="36"><text x="838" y="374">1</text><text x="988" y="374">1</text><text x="700" y="560">p</text><text x="700" y="640">p1</text><text x="1161" y="568">p</text><text x="907" y="800">p</text></g>
          <g fill="none" stroke="#777" stroke-width="2">
            <path d="M379 262h114l4 8 5-14 3 6h98M379 733h114l4 8 5-14 3 6h98M404 262v471M586 262v471" />
            <path d="M793 262h104l4 8 5-14 3 6h104M793 733h104l4 8 5-14 3 6h104" />
            <path d="M260 424v104l-8 6 14 4-6 4v112M352 477h70M352 595h70" />
            <path d="M793 386h224M814 376v50M853 376v88M959 376v88M997 376v50M733 428h78M733 478h100M733 595h100M733 643h78M743 408v254M1003 428h80M998 448h80M998 631h80M1003 643h80M1070 408v50M1070 614v50M1146 428h24M1160 418v90M1160 584v70M1146 643h24M814 664v160M997 664v160M803 814h204" />
            <path d="M735 436l18-18M735 486l18-18M735 603l18-18M735 651l18-18M1062 420l18 18M1062 440l18 18M1062 623l18 18M1062 635l18 18M1151 419l18 18M1151 634l18 18M805 395l18-18M844 395l18-18M950 395l18-18M988 395l18-18M805 823l18-18M988 823l18-18" />
            <path d="M853 465v25M841 477h24M959 465v25M947 477h24M853 583v25M841 595h24M959 583v25M947 595h24" stroke="#333" />
          </g>
          <g fill="none" stroke="#222" stroke-width="3">
            <path d="M391 262v471M601 262v471M806 262v471M1004 262v471M258 440h118M258 451h118M258 623h118M258 633h118" />
            <path d="M376 428h15v215h-15zM814 428h183v215H814z" />
            <path d="M365 466h10v23h-10zM402 466h10v23h-10zM365 584h10v23h-10zM402 584h10v23h-10z" stroke-width="2" />
            <path d="M831 440h149v9h-60q-13 2-13 16v145q2 12 14 12h59v10H831v-10h59q12 0 13-12V465q0-14-13-16h-59z" fill="#aaa" />
            <path d="M240 496v90M124 492q-38 38-4 84" stroke-width="2" />
          </g>
          <path d="M240 606l-8-26h16zM132 486l-20 10 12 12zM125 583l-22-12 14-10z" />
        </svg>
      </figure>
      <table class="props">
        <tbody>
          <tr class="cat"><th colspan="2">Σύνδεση</th></tr>
          {#each section as [k, v]}<tr><th>{k}</th><td>{v}</td></tr>{/each}
          <tr class="cat"><th colspan="2">Γεωμετρία</th></tr>
          {#each geometry as v}<tr><th></th><td>{v} mm</td></tr>{/each}
        </tbody>
      </table>
      <div class="help"></div>
      <div class="grip"><i></i></div>
      <div class="tools dock">
        {#each bottomTools as s}{@render tool(s)}{/each}
        <button class="tool" aria-label="Χρώμα"><i class="wheel"></i></button>
        <span class="more">»</span>
      </div>
    </aside>
  </main>

  <footer>
    <a href="#tol">www.tol.com.gr</a>
    <span class="codes">{@render icon('calc')}<svg width="7" height="5" viewBox="0 0 7 5"><path d="M.5.5l3 3 3-3" fill="none" stroke="#444" stroke-width="1.300" /></svg>{@render icon('lines')}</span>
    <span class="mode">ΕΥΡΩΚΩΔΙΚΕΣ | Ιδιομορφική | Κ.Π.Μ. | q=3.00 | Σχεδιασμού | Τύπος 1</span>
    <span class="project">Νέο Έργο</span>
    <span class="lock">{@render icon('lock')}</span>
    <div class="snap">
      <button>κάναβος</button>
      <svg width="7" height="5" viewBox="0 0 7 5"><path d="M.5.5l3 3 3-3" fill="none" stroke="#444" stroke-width="1.300" /></svg>
      <button>έλξη</button><button class="on">dxf</button><button>έλξη</button><button class="on">κάθετα</button>
      <span>−</span><input type="range" aria-label="Μεγέθυνση" /><span>+</span>
    </div>
  </footer>

  <section class="win one">
    {@render winHead('Παράθυρο Εργασίας 1')}
    {@render winTools()}
    <div class="win-body">
      {@render sheet(hinge)}
      <div class="preview">
        <svg width="290" height="327" viewBox="855 200 700 980" preserveAspectRatio="none" aria-label="Σύνδεση άρθρωσης">
          <defs>
            <linearGradient id="edge"><stop offset="0" stop-color="#eee" /><stop offset=".3" stop-color="#888" /><stop offset=".5" stop-color="#ddd" /><stop offset=".8" stop-color="#555" /><stop offset="1" stop-color="#ccc" /></linearGradient>
            <linearGradient id="fillet"><stop offset="0" stop-color="#444" /><stop offset=".35" stop-color="#777" /><stop offset=".7" stop-color="#999" /><stop offset="1" stop-color="#ddd" /></linearGradient>
            <linearGradient id="hole" x2="1" y2="1"><stop offset="0" stop-color="#777" /><stop offset=".6" stop-color="#eee" /><stop offset="1" stop-color="#999" /></linearGradient>
          </defs>
          <path d="M1050 627 1216 507 1230 520 1113 608V640L1392 845 1380 860 1052 640z" fill="#efefef" />
          <path d="M1113 608 1224 530V718L1113 640z" fill="#333" /><path d="M1107 620l6-10v30l-6-8z" fill="#333" />
          <path d="M1227 522v200" stroke="#333" stroke-width="3" />
          <path d="M1185 640 1200 658 1188 695 1163 678z" fill="url(#hole)" />
          <path d="M1113 640 1392 845 1380 860 1052 640V627z" fill="#efefef" />
          <path d="M1052 630 1380 858V1083L1362 1070V880L1052 665z" fill="#bfbfbf" />
          <path d="M1380 860 1393 848V1078L1380 1085z" fill="#ddd" /><path d="M1383 860v223M1391 856v222" stroke="#444" stroke-width="4" />
          <path d="M862 765 1030 640 1048 650 1360 878V890H1328L1050 700H1008L893 785H862z" fill="#f0f0f0" />
          <path d="M862 768 878 772 895 770V985L880 992 865 985z" fill="url(#edge)" />
          <path d="M895 772 1008 690V905L895 985z" fill="#333" />
          <path d="M1008 690 1028 683 1050 688V908L1030 902 1008 907z" fill="url(#fillet)" />
          <path d="M1050 688 1328 888V1105L1050 908z" fill="#bfbfbf" />
          <path d="M1328 886 1345 890 1360 878V1103L1343 1112 1328 1105z" fill="url(#edge)" />
          <g fill="url(#hole)" stroke="#eee" stroke-width="2"><path d="M926 828 954 815V845L932 878 917 860z" /><path d="M1100 818 1118 815 1136 850 1134 875 1115 872 1103 840z" /><path d="M1245 910 1232 920 1237 958 1268 970V940L1252 925z" /></g>
        </svg>
      </div>
    </div>
    <div class="win-tabs"><button>{@render icon('sh1')}Παράθυρο Εργασίας 1</button></div>
  </section>

  <section class="win two">
    {@render winHead('Παράθυρο Εργασίας 2')}
    {@render winTools()}
    <div class="win-body">
      {@render sheet(moment)}
      <div class="preview">
        <svg width="295" height="425" viewBox="943 199 579 1257" preserveAspectRatio="none" aria-label="Σύνδεση ροπής">
          <path d="M1078 247 1124 220V274L1078 252z" fill="#505050" />
          <path d="M1001 281 1123 213 1126 219 1060 257 1004 287z" fill="#ddd" />
          <path d="M1060 256 1078 250 1172 300 1186 300 1124 338V1272L1078 1248H1060z" fill="#e1e1e1" />
          <path d="M1006 285 1056 257V1248L1006 1275z" fill="#505050" />
          <path d="M1003 282v993" stroke="#ddd" stroke-width="4" />
          <path d="M1057 257v990" stroke="#555" stroke-width="4" /><path d="M1063 255v993" stroke="#aaa" stroke-width="3" /><path d="M1067 255v993" stroke="#777" stroke-width="2" />
          <path d="M1118 337 1241 270 1244 276 1124 344V1333L1118 1330z" fill="#ddd" />
          <path d="M1124 342 1243 276V1270L1124 1332z" fill="#505050" />
          <path d="M1128 527 1243 466 1249 474V484L1143 545V755L1128 757z" fill="#ddd" /><path d="M1133 534V755" stroke="#fff" stroke-width="2" />
          <path d="M1138 536 1248 474" stroke="#444" stroke-width="4" />
          <path d="M1140 545 1192 568V700L1182 714 1140 738z" fill="#505050" />
          <path d="M1190 568 1355 650 1392 632 1406 640V805L1190 700z" fill="#e0e0e0" />
          <path d="M1190 688 1398 795V818L1182 718z" fill="#f6f6f6" /><path d="M1186 708 1398 810" stroke="#ddd" stroke-width="4" />
          <path d="M1145 738 1182 714 1400 818 1355 845z" fill="#ccc" /><path d="M1408 758 1454 785 1410 810z" fill="#ccc" />
          <path d="M1138 738 1355 842V850L1138 746z" fill="#ddd" />
          <path d="M1354 843 1396 820 1406 793 1412 810 1456 785V792L1354 850z" fill="#505050" />
          <path d="M1406 635V800" stroke="#f4f4f4" stroke-width="4" />
          <path d="M1140 541 1245 483 1456 587 1355 643z" fill="#ccc" /><path d="M1138 541 1355 643V653L1138 550z" fill="#e6e6e6" />
          <path d="M1354 645 1456 588V595L1412 620 1405 640 1390 632 1354 652z" fill="#505050" />
          <ellipse cx="1156" cy="572" rx="6" ry="12" fill="#eee" /><ellipse cx="1156" cy="695" rx="6" ry="12" fill="#eee" />
        </svg>
      </div>
    </div>
  </section>
</div>

<style>
  :global(body) { margin: 0; overflow: hidden; }
  .app { --blue: #2a579a; position: relative; height: 100vh; display: flex; flex-direction: column; overflow: hidden; background: #e6e6e6; color: #444; font: 11px/16px 'Open Sans', 'Noto Sans', sans-serif; }
  button, input, select { font: inherit; color: inherit; border: 0; margin: 0; padding: 0; background: none; }
  h2, h3, figure, ul { margin: 0; padding: 0; font-weight: 400; }
  i { display: block; font-style: normal; flex: none; }
  .ic { width: 16px; height: 16px; flex: none; }
  .on { background: #cdcdcd; }

  .tabs { position: relative; display: flex; align-items: center; height: 25px; background: var(--blue); color: #fff; border-bottom: 1px solid #c6c6c6; font-size: 12px; flex: none; }
  .tabs > button, .tabs > label, .product { position: relative; white-space: nowrap; flex: none; height: 25px; line-height: 24px; }
  .tabs > button:first-of-type { padding-right: 6px; }
  .tabs .active { background: #f0f0f0; color: #6b5526; height: 26px; align-self: flex-start; }
  .tabs .context { background: #2b4b82; }
  .product { font-size: 11px; }
  .tabs .style { margin: 0 5px 0 8px; }
  .deco { position: absolute; right: 0; top: 0; }
  .tabs .search { display: flex; align-items: center; gap: 14px; margin-left: 20px; flex: 1; }
  .search input { width: 180px; }
  .search input::placeholder { color: #b4c4de; opacity: 1; }

  .ribbon { display: flex; height: 97px; background: #f0f0f0; border-bottom: 1px solid #d0d0d0; flex: none; }
  .ribbon section { box-sizing: border-box; border-right: 1px solid #d4d4d4; margin: 2px 0 3px; display: flex; flex-direction: column; }
  .btns { display: flex; height: 70px; margin-top: 2px; padding-left: 4px; }
  .btns.start { padding-left: 0; }
  .btns > i { width: 1px; margin: 5px 5px 5px 0; background: #d4d4d4; }
  .btns button { box-sizing: border-box; display: flex; flex-direction: column; align-items: center; white-space: nowrap; flex: none; line-height: 15px; font-size: 12px; padding-top: 2px; border: 1px solid transparent; }
  .btns button.on { background: #c5c5c5; border-color: var(--blue); }
  .btns button svg { flex: none; }
  .btns .off { color: #ababab; }
  .btns button .chev { margin-top: 5px; }
  h3 { text-align: center; font-size: 12px; color: #666; line-height: 16px; padding-top: 2px; }

  main { flex: 1; display: flex; min-height: 0; }
  .left { width: 332px; margin-right: 6px; display: flex; flex-direction: column; flex: none; }
  .panel { display: flex; flex-direction: column; }
  .view { height: 426px; border-bottom: 1px solid #bbb; }
  .library { flex: 1; min-height: 0; }
  .panel-head { display: flex; align-items: center; height: 40px; padding-right: 6px; gap: 10px; flex: none; box-sizing: border-box; }
  .library .panel-head { height: 46px; padding-top: 4px; }
  h2 { font-size: 20px; line-height: 28px; flex: 1; padding-left: 2px; white-space: nowrap; }
  .panel-head button { width: 9px; display: grid; place-items: center; }
  .tools { display: flex; align-items: center; background: #f0f0f0; flex: none; }
  .tools.two { flex-direction: column; align-items: stretch; height: 53px; padding-left: 6px; border-bottom: 1px solid #d0d0d0; }
  .two > div { display: flex; align-items: center; height: 26px; }
  .tools.two > div:first-child { padding-left: 3px; height: 25px; }
  .tool { width: 22px; height: 20px; display: grid; place-items: center; flex: none; }
  .dim { opacity: .5; }
  .sep { width: 1px; height: 20px; margin: 0 4px; background: #d0d0d0; }
  .caret { width: 12px; height: 12px; display: grid; place-items: center; }
  .caret::after { content: ''; border: 3px solid transparent; border-top: 4px solid #777; border-bottom: 0; }
  .space { width: 9px; }
  .space.small { width: 10px; }
  select { width: 66px; height: 22px; margin-right: 2px; padding-left: 3px; background: #fff; border: 1px solid #ccc; font-size: 12px; appearance: none; background-image: linear-gradient(45deg, transparent 50%, #777 50%), linear-gradient(-45deg, transparent 50%, #777 50%); background-size: 3px 3px; background-position: 55px 9px, 58px 9px; background-repeat: no-repeat; }
  .tree-box { position: relative; flex: 1; min-height: 0; overflow: hidden; background: #fff; border-right: 1px solid #ccc; border-bottom: 1px solid #ccc; }
  .tree { list-style: none; padding-top: 1px; }
  .view .tree { color: #111; }
  .tree li { display: flex; align-items: center; height: 17px; white-space: nowrap; }
  .guide, .exp { position: relative; width: 17px; height: 17px; }
  .exp svg { position: absolute; left: 5px; top: 4px; }
  .rule::before, .child .exp::before { content: ''; position: absolute; left: 8px; top: 0; height: 17px; border-left: 1px solid #c8c8c8; }
  .last .exp::before { height: 9px; }
  .child .exp::after { content: ''; position: absolute; left: 9px; top: 8px; width: 8px; border-top: 1px solid #c8c8c8; }
  .tree label { display: flex; align-items: center; flex: 1; height: 17px; gap: 6px; padding-left: 3px; }
  .tree input { appearance: none; width: 11px; height: 11px; border: 1px solid #999; box-sizing: border-box; background: #fff; position: relative; flex: none; }
  .tree input:checked::after { content: ''; position: absolute; left: 3px; top: 0; width: 2px; height: 5px; border: solid #666; border-width: 0 1px 1px 0; rotate: 40deg; }
  .node { display: flex; align-items: center; gap: 3px; height: 17px; }
  .sel .node { flex: 1; margin-right: 2px; background: #f0f0f0; }
  .view .sel .node { margin-right: 18px; }
  .tree .sel { color: #555; }
  .thumb { position: absolute; right: 2px; top: 19px; width: 2px; height: 143px; background: #aaa; }
  .foot { height: 27px; padding: 0 0 2px 6px; box-sizing: border-box; }
  .pane-tabs { display: flex; height: 22px; background: #e6e6e6; border-top: 1px solid #ccc; flex: none; }
  .pane-tabs button { display: flex; align-items: center; gap: 2px; padding: 0 4px 0 2px; font-size: 12px; }
  .pane-tabs .current { background: #fff; border-right: 1px solid #aaa; margin-right: 4px; }
  .tools.text { height: 24px; padding-left: 8px; border-bottom: 1px solid #d0d0d0; font-size: 12px; }
  .tools.text > button:not(.tool) { height: 19px; padding: 0 3px; }

  .center { flex: 1; display: flex; flex-direction: column; min-width: 0; }
  .mdi-top { height: 61px; background: #f0f0f0; border-left: 1px solid #ccc; display: flex; justify-content: flex-end; margin-bottom: 4px; }
  .scroll { width: 18px; border-left: 1px solid #fff; display: flex; flex-direction: column; justify-content: space-between; align-items: center; padding: 6px 2px 6px 0; box-sizing: border-box; }
  .a-up, .a-down { border: 4px solid transparent; border-bottom: 6px solid #999; border-top: 0; }
  .a-down { border-top: 6px solid #999; border-bottom: 0; }
  .canvas { flex: 1; background: #fff; border-left: 2px solid #777; border-top: 2px solid #888; margin: 0 1px 3px 1px; }

  .right { width: 388px; padding-left: 6px; border-left: 1px solid #ccc; display: flex; flex-direction: column; flex: none; }
  .right header { display: flex; height: 45px; align-items: center; flex: none; }
  .right header i { border: 3px solid transparent; border-right: 4px solid #666; margin: -24px 1px 0 0; }
  .right > .tools { height: 24px; padding-left: 10px; }
  figure { height: 249px; padding: 14px 0 16px; background: #fff; background-clip: content-box; flex: none; }
  figure svg { display: block; margin: 0 auto; }
  .props { width: 100%; border-collapse: collapse; table-layout: fixed; background: #f0f0f0; }
  .props tr { height: 17px; }
  .props th, .props td { padding: 0 0 0 4px; line-height: 16px; text-align: left; font-weight: 400; background: #fff; border-bottom: 1px solid #eee; }
  .props th { width: 191px; border-left: 16px solid #e9e9e9; border-right: 1px solid #e8e8e8; }
  .props .cat th { position: relative; background: #eee; font-weight: 700; }
  .props .cat th::before { content: ''; position: absolute; left: -11px; top: 6px; border-left: 5px solid transparent; border-bottom: 5px solid #888; }
  .help { flex: 1; background: linear-gradient(#fff 182px, #ccc 182px 184px, #f0f0f0 184px); }
  .grip { height: 9px; background: #ccc; display: grid; justify-content: start; align-items: center; padding-left: 165px; }
  .grip i { width: 58px; height: 4px; background: repeating-linear-gradient(90deg, #fff 0 1px, #888 1px 4px, #ccc 4px 6px); }
  .right > .dock { height: 30px; padding-left: 55px; }
  .dock .tool { width: 26px; height: 30px; }
  .wheel { width: 15px; height: 15px; border-radius: 50%; background: radial-gradient(#fff, transparent 60%), conic-gradient(red, #f0f, #00f, #0ff, #0f0, #ff0, red); }
  .more { font-size: 16px; padding-left: 7px; line-height: 12px; }

  footer { height: 18px; border-top: 1px solid #ccc; background: #f0f0f0; display: flex; align-items: flex-start; font-size: 12px; line-height: 24px; overflow: hidden; flex: none; padding-top: 1px; white-space: nowrap; }
  footer a { color: inherit; text-decoration: none; width: 448px; padding-left: 7px; box-sizing: border-box; }
  .codes { display: flex; align-items: center; gap: 5px; width: 68px; height: 22px; padding-left: 6px; box-sizing: border-box; }
  .mode { width: 457px; }
  .project { width: 403px; }
  .lock { flex: 1; display: flex; align-items: center; height: 22px; }
  .snap { display: flex; align-items: center; gap: 2px; height: 24px; }
  .snap button { height: 24px; padding: 0 3px; }
  .snap .on { border: 1px solid var(--blue); height: 26px; }
  .snap span { font-size: 18px; color: #888; width: 18px; text-align: center; }
  .snap input { appearance: none; width: 88px; height: 16px; background: linear-gradient(#999, #999) center / 100% 1px no-repeat; }
  .snap input::-webkit-slider-thumb { appearance: none; width: 5px; height: 16px; background: #666; }

  .win { position: absolute; display: flex; flex-direction: column; box-sizing: border-box; background: #e6e6e6; padding: 0 4px 4px 3px; }
  .win.one { left: 340px; top: 192px; right: 393px; height: 536px; border: 1px solid #bbb; box-shadow: 2px 2px 6px #0005; }
  .win.two { left: 461px; top: 583px; right: 249px; height: 496px; border: 1px solid var(--blue); box-shadow: 0 0 10px #0005; }
  .win-head { display: flex; align-items: center; height: 38px; padding: 5px 3px 0 0; box-sizing: border-box; flex: none; }
  .win-head h2 { line-height: 32px; }
  .win.two h2 { color: #0a6cd6; }
  .win-head button { width: 9px; display: grid; place-items: center; }
  .win > .win-tools { display: flex; align-items: center; height: 24px; background: #f0f0f0; font-size: 12px; padding-left: 8px; flex: none; }
  .win-tools button { display: flex; align-items: center; gap: 2px; height: 20px; padding: 0 2px; white-space: nowrap; flex: none; }
  .win-tools .wide { width: 129px; }
  .win-tools .wide2 { width: 138px; }
  .win-tools .sep { margin: 0 5px; }
  .win > .win-body { flex: 1; display: flex; align-items: stretch; min-height: 0; gap: 2px; }
  .pane { flex: 1; min-width: 0; display: grid; grid-template: minmax(0, 1fr) 17px / minmax(0, 1fr) 16px; background: #f0f0f0; border: 1px solid #666; }
  .clip { overflow: hidden; }
  .preview { width: 288px; background: #fff; border: 1px solid #ccc; border-top-color: #666; border-left-color: #666; overflow: hidden; flex: none; }
  .win.two .preview { width: 295px; }
  .preview svg { display: block; }
  .vbar i { width: 2px; height: 17px; margin: 17px 0 0 8px; background: #888; }
  .hbar { display: flex; align-items: center; }
  .hbar i { flex: 1; height: 2px; margin: 0 78px 0 17px; background: #888; }
  .win > .win-tabs { display: flex; align-items: stretch; height: 23px; flex: none; }
  .win-tabs button { display: flex; align-items: center; gap: 3px; background: #fff; padding: 0 6px 0 3px; border-bottom: 1px solid #aaa; font-size: 12px; }

  .sheet { border-collapse: collapse; table-layout: fixed; color: #000; background: #fff; font-size: 11px; }
  .sheet tr { height: 20px; }
  .sheet thead tr, .sheet .filter { height: 22px; }
  .sheet th { padding: 0; font-size: 12px; font-weight: 400; line-height: 18px; white-space: pre; border: 1px solid #000; background: #f0f0f0; box-shadow: inset 1px 1px #fff; }
  .sheet tr > :first-child:not([colspan='2']):not(.x) { border-left: 0; }
  .sheet tr:first-child th { border-top: 0; }
  .sheet td { padding: 0 2px; line-height: 18px; border: 1px solid #6a6a6a; text-align: center; white-space: nowrap; overflow: hidden; }
  .sheet td.num { background: #f5f5b8; text-align: right; padding: 0 1px; border-color: #000; color: #222; font-size: 12px; }
  .sheet .pink { background: #ffc6c6; text-align: left; }
  .sheet .rose { background: #dcc6c6; }
  .sheet .green { background: #c6ffc6; }
  .sheet .sage { background: #c6dcc6; }
  .sheet .end { text-align: right; }
  .sheet .lav { background: #c6c6dc; text-align: right; }
  .sheet .dash { color: #b00018; }
  .sheet .act { padding: 0 1px; }
  .act button { display: block; width: 100%; height: 17px; line-height: 14px; box-sizing: border-box; border: 1px solid #ccc; border-radius: 3px; background: #fdfdfd; }
  .sheet .focus { padding: 0; }
  .focus button { border: 2px solid #000; border-radius: 0; height: 19px; }
</style>
